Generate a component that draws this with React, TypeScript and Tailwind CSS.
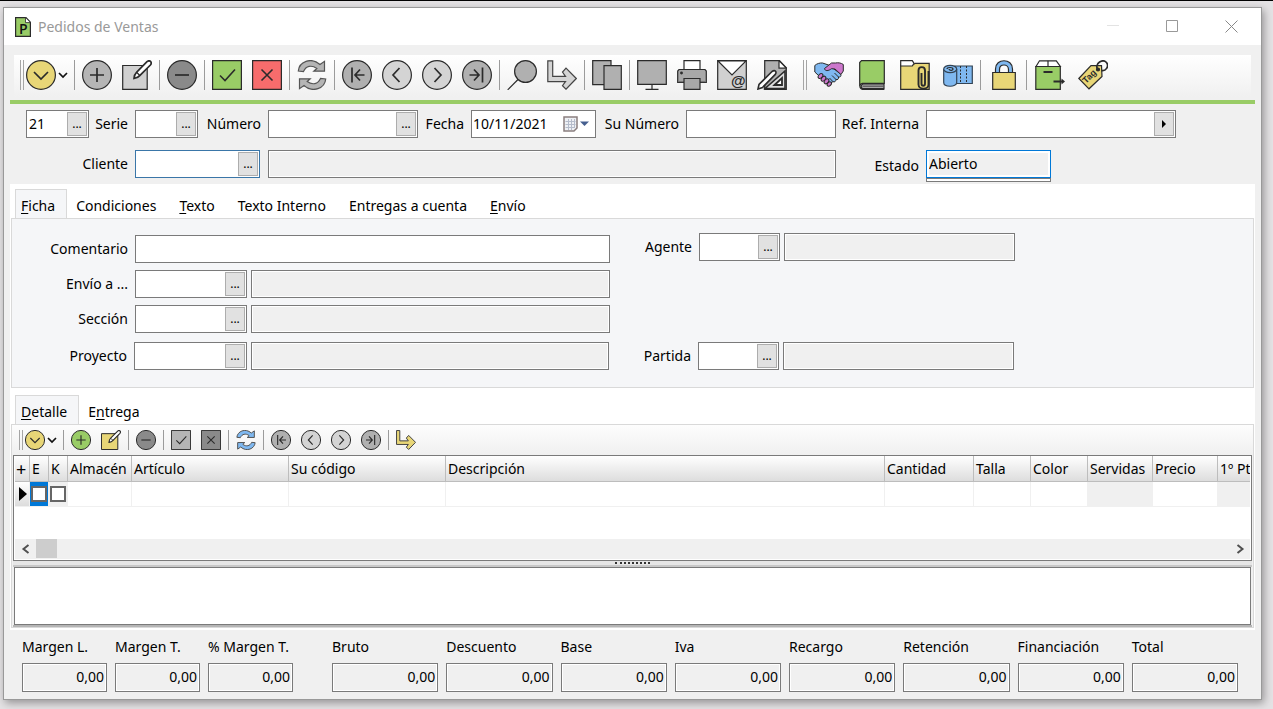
import React from "react";
import clsx from "clsx";

const DARK = "#2b2b2b";

type IconProps = { size: number; fill?: string; children: React.ReactNode };

const Icon = ({ size, fill = "none", children }: IconProps) => (
  <svg
    width={size}
    height={size}
    viewBox="0 0 30 30"
    fill={fill}
    stroke={DARK}
    strokeWidth={size > 20 ? 1.2 : 1.5}
    aria-hidden="true"
  >
    {children}
  </svg>
);

type Shape = { size?: number; fill?: string };

const DownIcon = ({ size = 30, fill = "#e8d677" }: Shape) => (
  <Icon size={size} fill={fill}>
    <circle cx="15" cy="15" r="14.4" />
    <path d="M8 12l7 7 7-7" fill="none" strokeWidth="1.7" />
  </Icon>
);

const PlusIcon = ({ size = 30, fill = "#b5b5b5" }: Shape) => (
  <Icon size={size} fill={fill}>
    <circle cx="15" cy="15" r="14.4" />
    <path d="M15 8v14M8 15h14" strokeWidth="1.7" />
  </Icon>
);

const MinusIcon = ({ size = 30, fill = "#8a8a8a" }: Shape) => (
  <Icon size={size} fill={fill}>
    <circle cx="15" cy="15" r="14.4" />
    <path d="M8 15h14" strokeWidth="1.7" />
  </Icon>
);

const EditIcon = ({ size = 30, fill = "#d0d0d0" }: Shape) => (
  <Icon size={size}>
    <path d="M.7 5.500h24.500v23.800H.7z" fill={fill} />
    <path
      d="M12 18.500c.2-3 .7-4.500 2.500-6.200L25 1.700c2.600-2.300 5.600.6 3.400 3.300L18 15.400c-1.500 1.800-3.300 2.600-6 3.100z"
      fill="#fff"
      strokeWidth="1.7"
    />
    <path d="M14.800 12.500l3 3" />
  </Icon>
);

const CheckIcon = ({ size = 30, fill = "#99cc66" }: Shape) => (
  <Icon size={size} fill={fill}>
    <path d="M.6.6h28.800v28.800H.6z" />
    <path d="M8 15.500l5 5L23 9.500" fill="none" strokeWidth="1.6" />
  </Icon>
);

const CrossIcon = ({ size = 30, fill = "#f76c6c" }: Shape) => (
  <Icon size={size} fill={fill}>
    <path d="M.6.6h28.800v28.800H.6z" />
    <path d="M9.500 9.500l11 11M20.500 9.500l-11 11" strokeWidth="1.6" />
  </Icon>
);

const RefreshIcon = ({ size = 30, fill = "#b5b5b5" }: Shape) => (
  <Icon size={size} fill={fill}>
    <path d="M1.300 11C2 2 14-3.500 23 4.500l4.500-3.200v9.900H16.800l3-2.700C14.500 4.500 9 6 6.500 11.500z" stroke="#555" />
    <path d="M28.700 19C28 28 16 33.500 7 25.500l-4.500 3.200v-9.900h10.700l-3 2.700c5.300 4 10.800 2.500 13.300-3z" stroke="#555" />
  </Icon>
);

const FirstIcon = ({ size = 30 }: Shape) => (
  <Icon size={size} fill="#b0b0b0">
    <circle cx="15" cy="15" r="14.4" />
    <path d="M10 7.500v15M22.500 15h-9M18 9.500L13 15l5 5.500" fill="none" strokeWidth="1.7" />
  </Icon>
);

const PrevIcon = ({ size = 30 }: Shape) => (
  <Icon size={size} fill="#d4d4d4">
    <circle cx="15" cy="15" r="14.4" />
    <path d="M17.500 8L11 15l6.500 7" fill="none" strokeWidth="1.7" />
  </Icon>
);

const NextIcon = ({ size = 30 }: Shape) => (
  <Icon size={size} fill="#d4d4d4">
    <circle cx="15" cy="15" r="14.4" />
    <path d="M12.500 8L19 15l-6.500 7" fill="none" strokeWidth="1.7" />
  </Icon>
);

const LastIcon = ({ size = 30 }: Shape) => (
  <Icon size={size} fill="#b0b0b0">
    <circle cx="15" cy="15" r="14.4" />
    <path d="M20.500 7.500v15M7.500 15h9M12 9.500l5 5.500-5 5.500" fill="none" strokeWidth="1.7" />
  </Icon>
);

const SearchIcon = () => (
  <Icon size={30} fill="#b0b0b0">
    <circle cx="18.500" cy="11.500" r="10.900" />
    <path d="M11 19.500L.7 29.800" />
  </Icon>
);

const TurnIcon = ({ size = 30, fill = "#d4d4d4" }: Shape) => (
  <Icon size={size} fill={fill}>
    <path d="M.8.8h4.900v15.500h12.800l-3-4.200 3.500-4L29.300 18.500 19 29.200l-3.500-3.500 3-4H.8z" stroke="#444" />
  </Icon>
);

const PagesIcon = () => (
  <Icon size={30} fill="#b0b0b0">
    <path d="M.7.7h18.300v24H.7z" />
    <path d="M12 5.700h17.300v23.600H12z" />
  </Icon>
);

const MonitorIcon = () => (
  <Icon size={30} fill="#b0b0b0">
    <path d="M.7.7h28.600v23.600H.7zM15 24.300v5M8.500 29.400h13" />
  </Icon>
);

const PrinterIcon = () => (
  <Icon size={30} fill="#a8a8a8">
    <path d="M7 .7h16v9H7z" fill="#fff" />
    <path d="M2 9.500h26l1.300 1.500v11.500H.7V11z" />
    <path d="M1 21.500h28" stroke="#777" />
    <path d="M7 18.500h16v10.800H7z" />
    <circle cx="4.500" cy="13" r=".8" fill={DARK} />
  </Icon>
);

const MailIcon = () => (
  <Icon size={30}>
    <path d="M.7.7h28.600v28.600H.7z" fill="#d0d0d0" />
    <path d="M1 1l14 14L29 1z" fill="#fff" />
    <text
      x="14"
      y="26"
      className="font-['Liberation_Sans',sans-serif] text-[15px] font-bold"
      fill={DARK}
      stroke="none"
    >
      @
    </text>
  </Icon>
);

const DesignIcon = () => (
  <Icon size={30}>
    <path d="M7.700.7h14.800l6.800 7v21.600H7.700z" fill="#b0b0b0" />
    <path d="M22 .7v7.500h7.300z" fill="#fff" />
    <path d="M8 28.500L28 11v17.500z" fill="#ddd" strokeWidth="1.6" />
    <path d="M17.500 25L25 18v7z" fill="#fff" strokeWidth="1.8" />
    <path d="M1 29l1-4.500L15 11.500c3-2 5 0 3.300 2.900L5.500 27.500z" fill="#fff" strokeWidth="1.6" />
  </Icon>
);

const HandshakeIcon = () => (
  <Icon size={30}>
    <path
      d="M.8 5.500C3 3.500 6 2.800 8.500 3l6 2L26 13.500c2 2 .5 4-1.500 3.500.5 2-1 3.200-2.700 2.500.3 1.800-1.200 2.900-2.800 2.200L14 24 4.500 15.500.8 12z"
      fill="#7fb8f0"
      strokeWidth="1"
    />
    <g fill="#cc77cc" strokeWidth="1">
      <ellipse cx="6.500" cy="16" rx="1.900" ry="2.800" transform="rotate(42 6.500 16)" />
      <ellipse cx="9.500" cy="18.700" rx="1.900" ry="2.800" transform="rotate(42 9.500 18.700)" />
      <ellipse cx="12.500" cy="21.300" rx="1.900" ry="2.800" transform="rotate(42 12.500 21.300)" />
      <ellipse cx="15.300" cy="24" rx="1.800" ry="2.500" transform="rotate(42 15.300 24)" />
    </g>
    <path
      d="M29.300 4.500C27 2.800 24 2.500 21.500 3h-4L10.500 8.500c.5 3 4 2.500 7 .2L21 9l6 5.500 2.300-3.500z"
      fill="#cc77cc"
      strokeWidth="1"
    />
    <path d="M20.500 13l4 4M18 15.500l4 4M15.500 18l3.500 3.700" strokeWidth="1" />
  </Icon>
);

const BookIcon = () => (
  <Icon size={30}>
    <path d="M2.700 26V2.500L4.500.7h22.800v22.600H5.500C2 24 2 28.500 5.500 29.300h21.800" fill="#99cc66" />
    <path d="M6 24h21v4.700H6c-2.500-1-2.500-3.500 0-4.700z" fill="#aaa" />
    <path d="M5.500 26.200H27" stroke="#555" />
  </Icon>
);

const FolderIcon = () => (
  <Icon size={30}>
    <path d="M.7 5h12l2.500-1.700h14v26H.7z" fill="#e8d677" />
    <path d="M.7.7h11.600l1.700 2.600-1.700 2.700H.7z" fill="#fff" />
    <path
      d="M21.500 13v10.500c0 3 3.500 3 3.500 0V10.500c0-4.500-6.500-4.500-6.500 0v14c0 5.500 10 5.500 10 0V11"
      strokeWidth="1.9"
    />
  </Icon>
);

const RollIcon = () => (
  <Icon size={30} fill="#7fb8f0">
    <path d="M12 6h17.300v17.500H12z" stroke="#345" />
    <path d="M.7 9.500v13c0 5 13 5 13 0v-13z" stroke="#345" />
    <ellipse cx="7.200" cy="9" rx="6.500" ry="3.700" stroke="#345" />
    <path d="M4 9c0-2 6-2 6 0s-4 1.500-4 0" />
    <path d="M17.500 6v17M23.500 6v17" strokeDasharray="2 1.500" strokeWidth="1" />
  </Icon>
);

const LockIcon = () => (
  <Icon size={30}>
    <path d="M6.500 12.500V9c0-11 17-11 17 0v3.500h-4V9.500c0-6-9-6-9 0v3z" fill="#7fb8f0" />
    <path d="M3.700 12.500h22.600v16.800H3.700z" fill="#e8d677" />
  </Icon>
);

const BoxIcon = () => (
  <Icon size={30}>
    <path d="M1 6.500L4.500.8h16.800l4 5.700z" fill="#fff" />
    <path d="M13 .8v5.700" />
    <path d="M.8 6.500h24.500v22.800H.8z" fill="#99cc66" />
    <path d="M8.500 12h9M18.500 21.500h9" strokeWidth="1.8" />
    <path d="M26.500 18.500l3.500 3-3.500 3z" fill={DARK} stroke="none" />
  </Icon>
);

const TagIcon = () => (
  <Icon size={30}>
    <path d="M.8 18.500L13 5.500l10.500.2.500 10.800-13 12.300z" fill="#e8d677" />
    <circle cx="20" cy="9.500" r="1.500" fill={DARK} />
    <path d="M19.500 9C16.500 3 25-1.500 28.500 2.500c3 4-1 9-5 8" strokeWidth="1.7" />
    <text
      x="8"
      y="24"
      transform="rotate(-45 8 24)"
      className="font-['Liberation_Sans',sans-serif] text-[9px] font-bold"
      fill={DARK}
      stroke="none"
    >
      Tag
    </text>
  </Icon>
);

const Caret = () => (
  <svg width="10" height="10" viewBox="0 0 10 10" fill="none" stroke="#111" strokeWidth="1.7" aria-hidden="true">
    <path d="M1 3l4 4 4-4" />
  </svg>
);

type ToolProps = { label: string; className?: string; children: React.ReactNode };

const Tool = ({ label, className = "w-10", children }: ToolProps) => (
  <button type="button" aria-label={label} title={label} className={clsx("flex shrink-0 items-center justify-center", className)}>
    {children}
  </button>
);

const Sep = ({ className = "w-[5px]" }: { className?: string }) => (
  <span className={clsx("flex shrink-0 justify-center self-stretch py-[5px]", className)}>
    <span className="w-px bg-[#9b9b9b]" />
  </span>
);

const Grip = () => <span className="my-[5px] w-1 shrink-0 self-stretch border-x border-[#a5a5a5]" />;

const box = "h-7 shrink-0 border border-[#7a7a7a]";

type FieldProps = {
  label: string;
  id?: string;
  value?: string;
  className?: string;
  glyph?: React.ReactNode;
  border?: string;
};

const Lookup = ({ label, id, value, className, glyph = "...", border = "border-[#7a7a7a]" }: FieldProps) => (
  <div className={clsx("flex h-7 shrink-0 border bg-white p-px", border, className)}>
    <input id={id} aria-label={id ? undefined : label} defaultValue={value} className="w-0 min-w-0 flex-1 pl-px outline-none" />
    <button
      type="button"
      aria-label={`Buscar ${label}`}
      className="flex w-5 shrink-0 items-center justify-center border border-[#adadad] bg-[#e1e1e1] text-xs"
    >
      {glyph}
    </button>
  </div>
);

const ReadOnly = ({ label, id, value, className }: FieldProps) => (
  <input
    id={id}
    aria-label={id ? undefined : label}
    readOnly
    defaultValue={value}
    className={clsx(box, "bg-[#f0f0f0] px-[2px] ring-1 ring-white ring-inset outline-none", className)}
  />
);

const Label = ({ htmlFor, className, children }: { htmlFor: string; className?: string; children: React.ReactNode }) => (
  <label htmlFor={htmlFor} className={clsx("shrink-0 pr-[7px] text-right whitespace-nowrap", className)}>
    {children}
  </label>
);

type TabProps = { active?: boolean; accel?: string; children: string };

const Tab = ({ active, accel, children }: TabProps) => {
  const at = accel ? children.indexOf(accel) : -1;
  return (
    <button
      type="button"
      role="tab"
      aria-selected={!!active}
      className={clsx(
        "h-[29px] pt-1 whitespace-nowrap",
        active ? "-mb-px border border-b-0 border-[#d9d9d9] bg-[#f5f6f8] pr-[11px] pl-[5px]" : "pr-[14px] pl-[9px]"
      )}
    >
      {at < 0 ? (
        children
      ) : (
        <>
          {children.slice(0, at)}
          <u className="underline-offset-2">{accel}</u>
          {children.slice(at + 1)}
        </>
      )}
    </button>
  );
};

const columns = [
  { name: "+", width: "w-[15px]" },
  { name: "E", width: "w-[19px]" },
  { name: "K", width: "w-[19px]" },
  { name: "Almacén", width: "w-[64px]" },
  { name: "Artículo", width: "w-[157px]" },
  { name: "Su código", width: "w-[157px]" },
  { name: "Descripción", width: "" },
  { name: "Cantidad", width: "w-[89px]" },
  { name: "Talla", width: "w-[57px]" },
  { name: "Color", width: "w-[57px]" },
  { name: "Servidas", width: "w-[65px]" },
  { name: "Precio", width: "w-[65px]" },
  { name: "1º Pt", width: "w-[32px]" },
];

const margins = ["Margen L.", "Margen T.", "% Margen T."];
const totals = ["Bruto", "Descuento", "Base", "Iva", "Recargo", "Retención", "Financiación", "Total"];

const TitleBar = () => (
  <header className="flex h-[37px] items-center bg-white pr-[23px] pl-[11px]">
    <svg width="16" height="20" viewBox="0 0 16 20" aria-hidden="true">
      <path d="M.6.6h10.400l4.400 4.600v14.200H.6z" fill="#99cc66" stroke={DARK} strokeWidth="1.2" />
      <path d="M10.500.6v5h5z" fill="#fff" stroke={DARK} strokeWidth=".8" />
      <text x="4" y="17" className="font-['Open_Sans',sans-serif] text-[14px] font-semibold" fill="#111">
        P
      </text>
    </svg>
    <h1 className="ml-[7px] flex-1 text-[#999999]">Pedidos de Ventas</h1>
    <div className="flex gap-[46px]">
      <button type="button" aria-label="Minimizar">
        <svg width="13" height="13" viewBox="0 0 13 13" stroke="#e3e3e3" aria-hidden="true">
          <path d="M0 5.500h12" />
        </svg>
      </button>
      <button type="button" aria-label="Maximizar">
        <svg width="13" height="13" viewBox="0 0 13 13" fill="none" stroke="#999" aria-hidden="true">
          <path d="M.5.500h11v11H.500z" />
        </svg>
      </button>
      <button type="button" aria-label="Cerrar">
        <svg width="13" height="13" viewBox="0 0 13 13" stroke="#888" aria-hidden="true">
          <path d="M.5.500l12 12M12.500.500l-12 12" />
        </svg>
      </button>
    </div>
  </header>
);

const MainToolbar = () => (
  <div className="mx-[10px] mt-[10px] flex h-[42px] items-center overflow-hidden bg-linear-to-b from-white to-[#f0f0f0] pb-0.5 pl-1.5">
    <Grip />
    <Tool label="Menú" className="ml-0.5 w-[30px]"><DownIcon /></Tool>
    <Tool label="Más opciones" className="w-4 pr-0.5"><Caret /></Tool>
    <Sep />
    <Tool label="Nuevo"><PlusIcon /></Tool>
    <Tool label="Editar"><EditIcon /></Tool>
    <Sep />
    <Tool label="Borrar"><MinusIcon /></Tool>
    <Sep />
    <Tool label="Aceptar"><CheckIcon /></Tool>
    <Tool label="Cancelar"><CrossIcon /></Tool>
    <Sep />
    <Tool label="Refrescar"><RefreshIcon /></Tool>
    <Sep />
    <Tool label="Primero"><FirstIcon /></Tool>
    <Tool label="Anterior"><PrevIcon /></Tool>
    <Tool label="Siguiente"><NextIcon /></Tool>
    <Tool label="Último"><LastIcon /></Tool>
    <Sep />
    <Tool label="Buscar"><SearchIcon /></Tool>
    <Tool label="Ir a"><TurnIcon /></Tool>
    <Sep />
    <Tool label="Duplicar"><PagesIcon /></Tool>
    <Sep />
    <Tool label="Pantalla"><MonitorIcon /></Tool>
    <Tool label="Imprimir"><PrinterIcon /></Tool>
    <Tool label="Enviar"><MailIcon /></Tool>
    <Tool label="Diseñar"><DesignIcon /></Tool>
    <span className="w-[11px] shrink-0" />
    <Grip />
    <Tool label="Acuerdos" className="w-[43px]"><HandshakeIcon /></Tool>
    <Tool label="Libro" className="w-[43px]"><BookIcon /></Tool>
    <Tool label="Adjuntos" className="w-[43px]"><FolderIcon /></Tool>
    <Tool label="Rollos" className="w-[43px]"><RollIcon /></Tool>
    <Sep className="w-[3px]" />
    <Tool label="Bloquear" className="w-[43px]"><LockIcon /></Tool>
    <Sep className="w-[3px]" />
    <Tool label="Servir" className="w-[43px]"><BoxIcon /></Tool>
    <Tool label="Etiquetas" className="w-[43px]"><TagIcon /></Tool>
  </div>
);

const HeaderForm = () => (
  <div className="pt-1.5 pl-[22px]">
    <div className="flex items-center">
      <Lookup label="Ejercicio" value="21" className="w-[63px]" />
      <Label htmlFor="serie" className="w-[46px]">Serie</Label>
      <Lookup id="serie" label="Serie" className="w-[63px]" />
      <Label htmlFor="numero" className="w-[70px]">Número</Label>
      <Lookup id="numero" label="Número" className="w-[150px]" />
      <Label htmlFor="fecha" className="w-[53px]">Fecha</Label>
      <div className={clsx(box, "flex w-[125px] bg-white pr-1.5")}>
        <input id="fecha" defaultValue="10/11/2021" className="w-0 flex-1 pl-px outline-none" />
        <button type="button" aria-label="Abrir calendario" className="flex items-center">
          <svg width="26" height="16" viewBox="0 0 26 16" aria-hidden="true">
            <path d="M1 1h13v11l-3 3H1z" fill="#eef0f4" stroke="#8a7f7f" strokeWidth="1.5" />
            <path d="M2.500 5.500h10M2.500 8.500h10M2.500 11.500h9M5.500 3v11M8.500 3v11M11.500 3v9" stroke="#b5bccb" />
            <path d="M17 5.500h9L21.500 10z" fill="#465f8f" />
          </svg>
        </button>
      </div>
      <Label htmlFor="su-numero" className="w-[90px]">Su Número</Label>
      <input id="su-numero" className={clsx(box, "w-[150px] bg-white px-1")} />
      <Label htmlFor="ref" className="w-[90px]">Ref. Interna</Label>
      <Lookup
        id="ref"
        label="Ref. Interna"
        className="w-[250px]"
        glyph={
          <svg width="4" height="8" viewBox="0 0 4 8" aria-hidden="true">
            <path d="M0 0l4 4-4 4z" />
          </svg>
        }
      />
    </div>
    <div className="mt-3 flex items-start">
      <Label htmlFor="cliente" className="w-[109px] leading-7">Cliente</Label>
      <Lookup id="cliente" label="Cliente" className="w-[125px]" border="border-[#3a76a8]" />
      <ReadOnly label="Nombre del cliente" className="ml-2 w-[568px]" />
      <Label htmlFor="estado" className="w-[90px] leading-8">Estado</Label>
      <div className="h-8 w-[125px] border border-[#7a7a7a] bg-white">
        <input
          id="estado"
          readOnly
          defaultValue="Abierto"
          className="-m-px block h-7 w-[125px] border border-[#0078d7] bg-[#f0f0f0] px-0.5 pb-0.5 shadow-[0_1px_0_#7a7a7a] ring-2 ring-white outline-none ring-inset"
        />
      </div>
    </div>
  </div>
);

const FichaPanel = () => (
  <div className="mx-px flex border border-[#d9d9d9] bg-[#f5f6f8] pb-[17px]">
    <div className="flex flex-col gap-[7px] pt-4">
      <div className="flex items-center">
        <Label htmlFor="comentario" className="w-[123px]">Comentario</Label>
        <input id="comentario" className={clsx(box, "w-[475px] bg-white px-1")} />
      </div>
      <div className="flex items-center">
        <Label htmlFor="envio" className="w-[123px]">Envío a ...</Label>
        <Lookup id="envio" label="Envío a" className="w-[112px]" />
        <ReadOnly label="Dirección de envío" className="ml-1 w-[359px]" />
      </div>
      <div className="flex items-center">
        <Label htmlFor="seccion" className="w-[123px]">Sección</Label>
        <Lookup id="seccion" label="Sección" className="w-[112px]" />
        <ReadOnly label="Nombre de la sección" className="ml-1 w-[359px]" />
      </div>
      <div className="mt-0.5 flex items-center">
        <Label htmlFor="proyecto" className="w-[122px]">Proyecto</Label>
        <Lookup id="proyecto" label="Proyecto" className="w-[113px]" />
        <ReadOnly label="Nombre del proyecto" className="ml-1 w-[358px]" />
      </div>
    </div>
    <div className="flex flex-col justify-between pt-[14px]">
      <div className="flex items-center">
        <Label htmlFor="agente" className="w-[89px]">Agente</Label>
        <Lookup id="agente" label="Agente" className="w-[81px]" />
        <ReadOnly label="Nombre del agente" className="ml-1 w-[231px]" />
      </div>
      <div className="flex items-center">
        <Label htmlFor="partida" className="w-[88px]">Partida</Label>
        <Lookup id="partida" label="Partida" className="w-[81px]" />
        <ReadOnly label="Nombre de la partida" className="ml-1 w-[231px]" />
      </div>
    </div>
  </div>
);

const DetailToolbar = () => (
  <div className="flex h-[30px] items-center bg-linear-to-b from-[#fdfdfd] to-[#f0f0f0] pl-[7px]">
    <Grip />
    <Tool label="Menú de líneas" className="ml-0.5 w-5"><DownIcon size={20} /></Tool>
    <Tool label="Más opciones de líneas" className="w-4 pr-0.5"><Caret /></Tool>
    <Sep />
    <Tool label="Nueva línea" className="w-[30px]"><PlusIcon size={20} fill="#99cc66" /></Tool>
    <Tool label="Editar línea" className="w-[30px]"><EditIcon size={20} fill="#e8d677" /></Tool>
    <Sep />
    <Tool label="Borrar línea" className="w-[30px]"><MinusIcon size={20} /></Tool>
    <Sep />
    <Tool label="Aceptar línea" className="w-[30px]"><CheckIcon size={20} fill="#b5b5b5" /></Tool>
    <Tool label="Cancelar línea" className="w-[30px]"><CrossIcon size={20} fill="#8a8a8a" /></Tool>
    <Sep />
    <Tool label="Refrescar líneas" className="w-[30px]"><RefreshIcon size={20} fill="#7fb8f0" /></Tool>
    <Sep />
    <Tool label="Primera línea" className="w-[30px]"><FirstIcon size={20} /></Tool>
    <Tool label="Línea anterior" className="w-[30px]"><PrevIcon size={20} /></Tool>
    <Tool label="Línea siguiente" className="w-[30px]"><NextIcon size={20} /></Tool>
    <Tool label="Última línea" className="w-[30px]"><LastIcon size={20} /></Tool>
    <Sep />
    <Tool label="Ir a línea" className="w-[30px]"><TurnIcon size={20} fill="#e8d677" /></Tool>
  </div>
);

const DetailGrid = () => (
  <div className="mx-px border border-[#7a7a7a] bg-white px-px pb-px">
    <table className="w-full table-fixed border-separate border-spacing-0">
      <thead>
        <tr className="h-[26px] bg-linear-to-b from-white to-[#dcdcdc]">
          {columns.map((col) => (
            <th
              key={col.name}
              className={clsx(
                "overflow-hidden border-b border-[#bdbdbd] p-0 pl-0.5 text-left font-normal whitespace-nowrap",
                col.name !== "1º Pt" && "border-r",
                col.name === "+" && "pl-px text-lg leading-4",
                col.width
              )}
            >
              {col.name}
            </th>
          ))}
        </tr>
      </thead>
      <tbody>
        <tr className="h-[25px]">
          {columns.map((col) => (
            <td
              key={col.name}
              className={clsx(
                "border-r border-b border-[#f0f0f0] p-0",
                col.name === "E" && "bg-[#0078d7]",
                (col.name === "K" || col.name === "Servidas" || col.name === "1º Pt") && "bg-[#f0f0f0]",
                col.name === "+" && "bg-linear-to-b from-white to-[#dcdcdc]"
              )}
            >
              {col.name === "+" && (
                <svg width="14" height="14" viewBox="0 0 14 14" aria-hidden="true">
                  <path d="M4 0l8 7-8 7z" />
                </svg>
              )}
              {(col.name === "E" || col.name === "K") && (
                <input
                  type="checkbox"
                  aria-label={col.name}
                  className="mx-px block size-4 appearance-none border-2 border-[#666666] bg-white"
                />
              )}
            </td>
          ))}
        </tr>
      </tbody>
    </table>
    <div className="mt-8 flex h-5 items-center bg-[#f0f0f0]">
      <button type="button" aria-label="Desplazar a la izquierda" className="flex w-[21px] justify-center">
        <svg width="10" height="10" viewBox="0 0 10 10" fill="none" stroke="#505050" strokeWidth="2" aria-hidden="true">
          <path d="M7.500 1l-5 4 5 4" />
        </svg>
      </button>
      <span className="h-[19px] w-[21px] self-start bg-[#cdcdcd]" />
      <span className="flex-1" />
      <button type="button" aria-label="Desplazar a la derecha" className="flex w-[21px] justify-center">
        <svg width="10" height="10" viewBox="0 0 10 10" fill="none" stroke="#505050" strokeWidth="2" aria-hidden="true">
          <path d="M2.500 1l5 4-5 4" />
        </svg>
      </button>
    </div>
  </div>
);

const Total = ({ name, className }: { name: string; className: string }) => (
  <div className={clsx("flex flex-col", className)}>
    <label htmlFor={name} className="mb-[6px] leading-5 whitespace-nowrap">{name}</label>
    <input
      id={name}
      readOnly
      defaultValue="0,00"
      className="h-[29px] w-full border border-[#7a7a7a] bg-[#f0f0f0] px-0.5 pb-0.5 text-right ring-1 ring-white outline-none ring-inset"
    />
  </div>
);

const App = () => {
  return (
    <div className="min-h-screen border-t border-black bg-[#e4e2e4] pt-1.5 pr-[11px] pb-[9px] pl-[3px] font-['Noto_Sans',sans-serif] text-sm text-black">
      <main className="border border-[#999999] bg-[#f0f0f0] pb-[7px] shadow-[2px_3px_8px_rgba(0,0,0,0.35)]">
        <TitleBar />
        <MainToolbar />
        <div className="mx-1.5 mt-[3px] h-1 bg-[#99cc66]" />
        <HeaderForm />

        <section className="mx-1.5 mt-0.5 bg-white pt-[5px] pb-0.5">
          <div role="tablist" className="flex px-[5px]">
            <Tab active accel="F">Ficha</Tab>
            <Tab>Condiciones</Tab>
            <Tab accel="T">Texto</Tab>
            <Tab>Texto Interno</Tab>
            <Tab>Entregas a cuenta</Tab>
            <Tab accel="E">Envío</Tab>
          </div>
          <FichaPanel />

          <div role="tablist" className="mt-[7px] flex px-[5px]">
            <Tab active accel="D">Detalle</Tab>
            <Tab accel="n">Entrega</Tab>
          </div>
          <div className="mx-px border border-[#d9d9d9] bg-[#f0f0f0]">
            <DetailToolbar />
            <DetailGrid />
            <div className="mx-px flex h-1.5 justify-center border-b-2 border-b-[#c8c8c8] bg-[#e6e6e6]">
              <span className="mt-px w-[35px] border-t-2 border-dotted border-[#333333]" />
            </div>
            <textarea
              aria-label="Observaciones"
              className="mx-0.5 block h-[58px] w-[calc(100%-4px)] resize-none border border-[#7a7a7a] bg-white px-1 outline-none"
            />
            <div className="mx-px h-0.5 bg-[#b5b5b5]" />
          </div>
        </section>

        <footer className="flex pt-[7px] pr-[23px] pl-[18px]">
          <div className="flex gap-2">
            {margins.map((name) => (
              <Total key={name} name={name} className="w-[85px]" />
            ))}
          </div>
          <div className="ml-[39px] flex flex-1 gap-2">
            {totals.map((name) => (
              <Total key={name} name={name} className="min-w-0 flex-1" />
            ))}
          </div>
        </footer>
      </main>
    </div>
  );
};

export default App;
